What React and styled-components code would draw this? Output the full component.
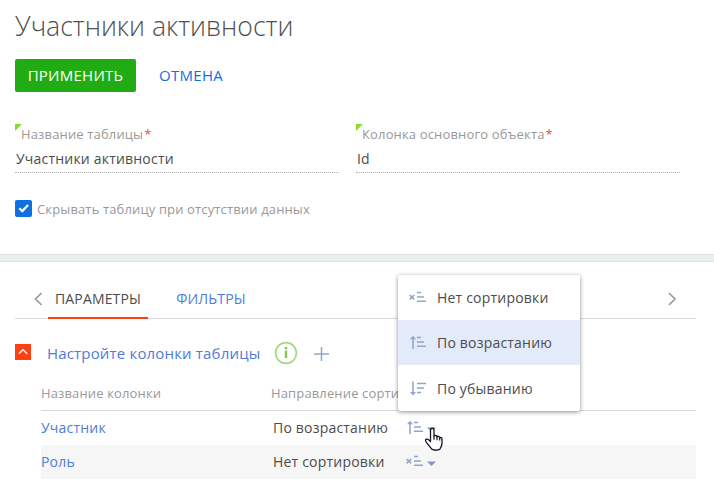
import React from "react";
import styled, { createGlobalStyle } from "styled-components";

const GlobalStyle = createGlobalStyle`
  * { box-sizing: border-box; }
  body {
    margin: 0;
    background: #fff;
    color: #4c4c4c;
    font-family: "Open Sans", "Noto Sans", sans-serif;
    font-size: 14px;
    overflow: hidden;
  }
  button { font-family: inherit; border: 0; background: none; padding: 0; margin: 0; }
  svg { display: block; flex: none; }
`;

const Page = styled.main`
  position: relative;
  width: 714px;
  height: 488px;
  overflow: hidden;
  white-space: nowrap;
`;

const Header = styled.header`
  height: 254px;
  padding: 8px 0 0 15px;
`;

const Title = styled.h1`
  margin: 0;
  height: 51px;
  line-height: 37px;
  font-size: 26.6px;
  font-weight: 300;
  color: #505050;
`;

const Actions = styled.div`
  display: flex;
  gap: 23px;
  height: 33px;
`;

const ApplyButton = styled.button`
  width: 121px;
  height: 33px;
  padding-bottom: 2px;
  border-radius: 2px;
  background: #22ac14;
  color: #fff;
  font-size: 15px;
  font-weight: 500;
  letter-spacing: 0.25px;
`;

const CancelButton = styled.button`
  padding-bottom: 2px;
  color: #0e70e0;
  font-size: 15px;
  letter-spacing: 0.3px;
`;

const Fields = styled.div`
  display: flex;
  gap: 17px;
  margin-top: 32px;
`;

const Field = styled.div`
  width: 324px;
  height: 49px;
  border-bottom: 1px dotted #b4b4b4;
`;

const Label = styled.div`
  display: flex;
  height: 20px;
  line-height: 20px;
  font-size: 13px;
  letter-spacing: 0.15px;
  color: #999;
`;

const Corner = styled.span`
  width: 7px;
  height: 7px;
  margin-right: -1px;
  background: #8bdb2e;
  clip-path: polygon(0 0, 100% 0, 0 100%);
`;

const Required = styled.span`
  color: #ef4b3a;
  margin-left: 1px;
`;

const Value = styled.div`
  padding-left: 1px;
  line-height: 30px;
  font-size: 14px;
  letter-spacing: 0.2px;
`;

const CheckRow = styled.label`
  display: flex;
  align-items: center;
  gap: 5px;
  height: 17px;
  margin-top: 27px;
  font-size: 13px;
  letter-spacing: 0.14px;
  color: #999;
`;

const CheckBox = styled.span`
  display: flex;
  width: 17px;
  height: 17px;
  border-radius: 2px;
  background: #0d6fe0;
`;

const Divider = styled.div`
  height: 8px;
  background: #ebeeee;
  border-top: 1px solid #e0e3e3;
  border-bottom: 1px solid #e0e3e3;
`;

const TabBar = styled.nav`
  display: flex;
  align-items: flex-end;
  width: 681px;
  height: 57px;
  margin-left: 15px;
  padding-left: 18px;
  padding-right: 16px;
  border-bottom: 1px solid #d9d9d9;
`;

const ScrollButton = styled.button`
  display: flex;
  justify-content: ${(p) => (p.$end ? "center" : "flex-start")};
  align-items: center;
  width: 15px;
  height: 38px;
  margin-left: ${(p) => (p.$end ? "auto" : "0")};
`;

const Tab = styled.button`
  width: ${(p) => p.$width}px;
  height: 39px;
  margin-bottom: -1px;
  margin-right: 21px;
  padding-bottom: 1px;
  border-bottom: 2px solid ${(p) => (p.$active ? "#ff4013" : "transparent")};
  color: ${(p) => (p.$active ? "#4c4c4c" : "#4f7bd9")};
  font-size: 14px;
  letter-spacing: 0.15px;
`;

const GroupHeader = styled.div`
  display: flex;
  align-items: center;
  height: 60px;
  padding-left: 15px;
  padding-top: 8px;
`;

const Toggle = styled.button`
  display: flex;
  width: 16px;
  height: 16px;
  margin-top: -2px;
  background: #ff4013;
`;

const GroupTitle = styled.span`
  width: 227px;
  margin-left: 16px;
  font-size: 15px;
  letter-spacing: 0.17px;
  color: #4f7bd9;
`;

const AddIcon = styled.svg`
  margin-left: 16px;
  margin-top: 2px;
`;

const Table = styled.div`
  width: 655px;
  margin-left: 41px;
`;

const HeadRow = styled.div`
  display: grid;
  grid-template-columns: 230px 1fr;
  height: 32px;
  line-height: 29px;
  border-bottom: 1px solid #d9d9d9;
  font-size: 13px;
  letter-spacing: 0.14px;
  color: #999;
`;

const Row = styled.div`
  display: grid;
  grid-template-columns: 232px 133px 20px 1fr;
  align-items: center;
  height: 34px;
  background: ${(p) => (p.$shaded ? "#f6f6f6" : "#fff")};
  letter-spacing: 0.2px;
`;

const CellText = styled.span`
  padding-bottom: 2px;
  color: ${(p) => (p.$link ? "#4f7bd9" : "inherit")};
`;

const IconCell = styled.span`
  padding-bottom: 1px;
`;

const Caret = styled.svg`
  margin-top: 3px;
`;

const Menu = styled.div`
  position: absolute;
  left: 398px;
  top: 275px;
  width: 182px;
  height: 136px;
  border-radius: 2px;
  background: #fff;
  box-shadow: 0 1px 4px rgba(0, 0, 0, 0.45);
  overflow: hidden;
`;

const MenuItem = styled.div`
  display: flex;
  align-items: center;
  gap: 8px;
  height: 45px;
  padding-left: 11px;
  background: ${(p) => (p.$selected ? "#e3eafa" : "transparent")};
  letter-spacing: 0.2px;

  &:last-child {
    height: 46px;
    padding-top: 1px;
  }
`;

const Pointer = styled.svg`
  position: absolute;
  left: 424px;
  top: 427px;
`;

const C = "#93a6c8";

function SortIcon({ kind }) {
  return (
    <svg width="20" height="15" viewBox="0 0 20 15" fill="none" stroke={C} strokeWidth="1.6">
      {kind === "none" && (
        <>
          <path d="M0.6 5l4.6 4.4M5.2 5L0.6 9.4" />
          <path d="M8 2.5h4M8 7h7M8 11.3h9" />
        </>
      )}
      {kind === "asc" && (
        <>
          <path d="M4 14V2" />
          <path d="M1 4.2L4 0.8l3 3.4z" fill={C} stroke="none" />
          <path d="M8 2.5h4M8 7h7M8 11.3h9" />
        </>
      )}
      {kind === "desc" && (
        <>
          <path d="M4 0.5v12" />
          <path d="M1 11L4 14.4l3-3.4z" fill={C} stroke="none" />
          <path d="M8 2.5h9M8 7h7M8 11.5h4" />
        </>
      )}
    </svg>
  );
}

function Chevron({ d }) {
  return (
    <svg width="9" height="14" viewBox="0 0 9 14" fill="none" stroke="#999" strokeWidth="1.6">
      <path d={d} />
    </svg>
  );
}

function TextField({ label, value }) {
  return (
    <Field>
      <Label>
        <Corner />
        {label}
        <Required>*</Required>
      </Label>
      <Value>{value}</Value>
    </Field>
  );
}

const rows = [
  { name: "Участник", sort: "По возрастанию", kind: "asc" },
  { name: "Роль", sort: "Нет сортировки", kind: "none" },
];

const options = [
  { text: "Нет сортировки", kind: "none" },
  { text: "По возрастанию", kind: "asc" },
  { text: "По убыванию", kind: "desc" },
];

export default function App() {
  return (
    <Page>
      <GlobalStyle />
      <Header>
        <Title>Участники активности</Title>
        <Actions>
          <ApplyButton>ПРИМЕНИТЬ</ApplyButton>
          <CancelButton>ОТМЕНА</CancelButton>
        </Actions>
        <Fields>
          <TextField label="Название таблицы" value="Участники активности" />
          <TextField label="Колонка основного объекта" value="Id" />
        </Fields>
        <CheckRow>
          <CheckBox>
            <svg width="17" height="17" viewBox="0 0 17 17" fill="none" stroke="#fff" strokeWidth="2.2">
              <path d="M4.3 8.3l3 2.8 5.8-6" />
            </svg>
          </CheckBox>
          <span>Скрывать таблицу при отсутствии данных</span>
        </CheckRow>
      </Header>
      <Divider />
      <TabBar>
        <ScrollButton aria-label="Назад">
          <Chevron d="M8.5 1L2.5 7l6 6" />
        </ScrollButton>
        <Tab $active $width={100}>ПАРАМЕТРЫ</Tab>
        <Tab $width={84}>ФИЛЬТРЫ</Tab>
        <ScrollButton $end aria-label="Вперёд">
          <Chevron d="M1 1l6 6-6 6" />
        </ScrollButton>
      </TabBar>
      <GroupHeader>
        <Toggle aria-label="Свернуть">
          <svg width="16" height="16" viewBox="0 0 16 16" fill="none" stroke="#fff" strokeWidth="1.4">
            <path d="M3.8 9.8L8 5.7l4.2 4.1" />
          </svg>
        </Toggle>
        <GroupTitle>Настройте колонки таблицы</GroupTitle>
        <svg width="24" height="24" viewBox="0 0 24 24">
          <circle cx="12" cy="12" r="10.4" fill="none" stroke="#a4d87f" strokeWidth="1.6" />
          <path d="M10.8 6h2.4v2.2h-2.4zM10.8 9.6h2.4V17h-2.4z" fill="#84c94f" />
        </svg>
        <AddIcon width="16" height="16" viewBox="0 0 16 16" stroke={C} strokeWidth="1.5">
          <path d="M7.5 1v14M0 8h15" />
        </AddIcon>
      </GroupHeader>
      <Table>
        <HeadRow>
          <span>Название колонки</span>
          <span>Направление сортировки</span>
        </HeadRow>
        {rows.map((r, i) => (
          <Row key={r.name} $shaded={i % 2 === 1}>
            <CellText $link>{r.name}</CellText>
            <CellText>{r.sort}</CellText>
            <IconCell>
              <SortIcon kind={r.kind} />
            </IconCell>
            <Caret width="10" height="6" viewBox="0 0 10 6">
              <path d="M1 0.5h9L5.5 5z" fill="#7f98c4" />
            </Caret>
          </Row>
        ))}
      </Table>
      <Menu>
        {options.map((o) => (
          <MenuItem key={o.text} $selected={o.kind === "asc"}>
            <SortIcon kind={o.kind} />
            <span>{o.text}</span>
          </MenuItem>
        ))}
      </Menu>
      <Pointer width="20" height="25" viewBox="0 0 20 25">
        <path
          d="M6.5 14.5V3.2C6.5.6 10 .6 10 3.2v6.2c.4-1.6 2.7-1.4 3 .4.8-1 2.5-.5 2.7.9.9-.6 2.3 0 2.3 1.4V16c0 2-.6 3.5-1.5 5l-.7 1.2c-1.4 1.3-6 1.4-7.8.1L3 16.2c-.8-1.2-1.8-2.1-1.5-3.2.5-1.4 2.3-1 3.4.1z"
          fill="#fff"
          stroke="#101020"
          strokeWidth="1.3"
          strokeLinejoin="round"
        />
        <path d="M10 9.2v3.6M13 10v3.2M15.7 11v2.6" stroke="#101020" strokeWidth="1.2" />
      </Pointer>
    </Page>
  );
}
